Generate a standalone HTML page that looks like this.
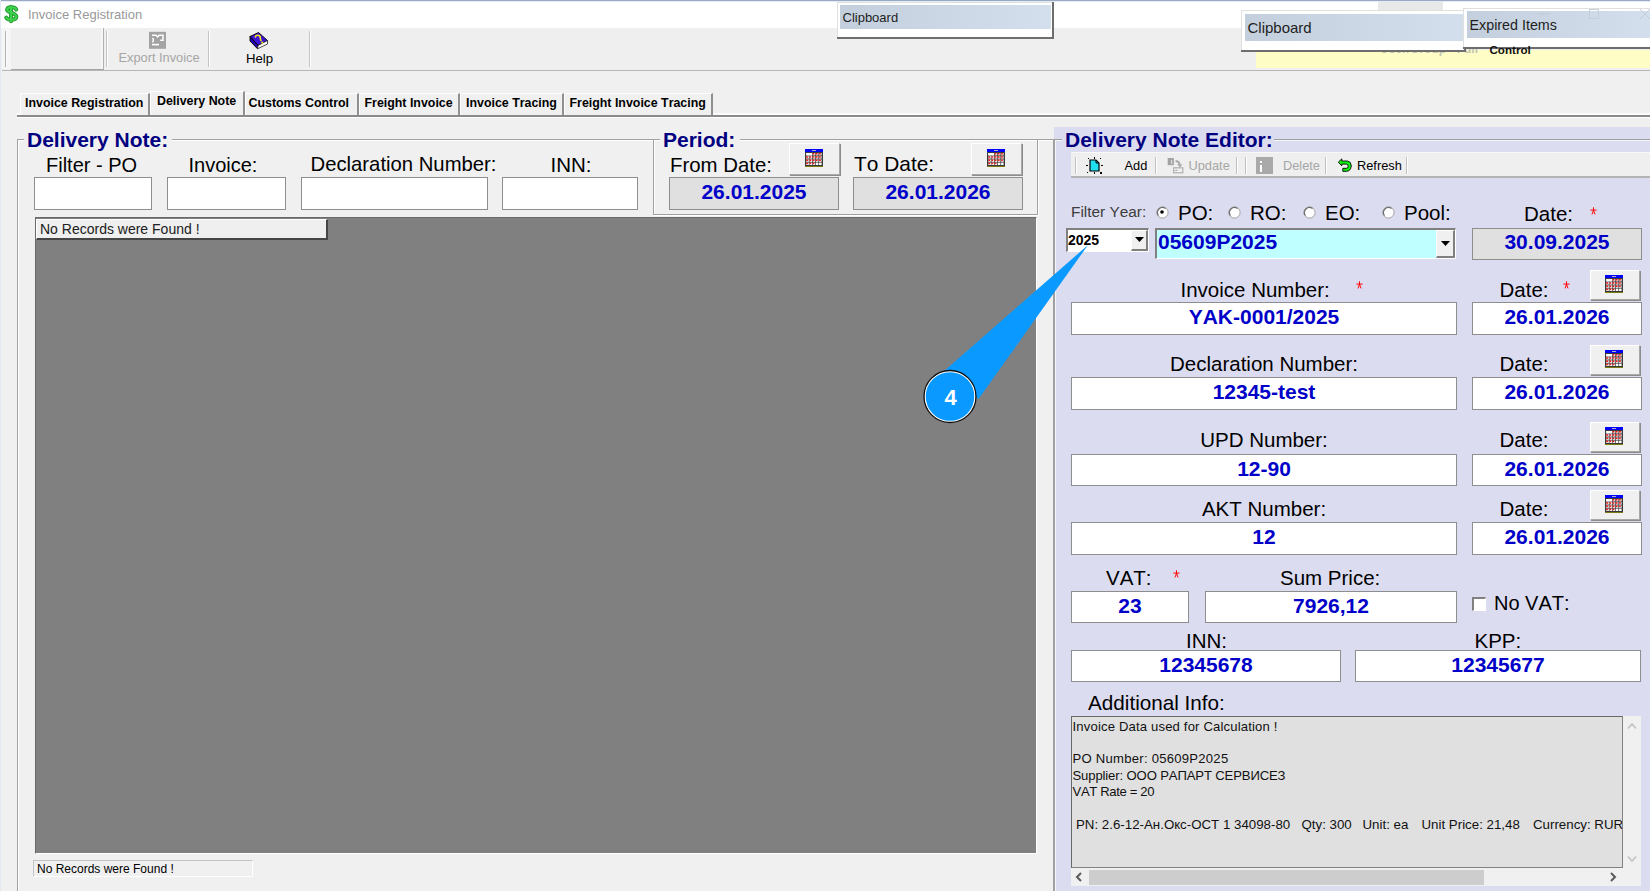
<!DOCTYPE html>
<html><head><meta charset="utf-8">
<style>
*{margin:0;padding:0;box-sizing:border-box}
html,body{width:1650px;height:891px;overflow:hidden;background:#f0f0f0;font-family:"Liberation Sans",sans-serif}
body{position:relative}
.a{position:absolute}
.t{position:absolute;white-space:nowrap;line-height:1;font-kerning:none}
.calbtn{background:#f0f0f0;border-top:1px solid #fff;border-left:1px solid #fff;border-right:1px solid #a8a8a8;border-bottom:1px solid #a8a8a8;box-shadow:1px 1px 0 #8c8c8c}
</style></head><body>

<div class="a" style="left:0px;top:0px;width:1650px;height:28px;background:#fff"></div>
<div class="a" style="left:0px;top:0px;width:1650px;height:1px;background:#9aa8c0"></div>
<div class="a" style="left:0px;top:1px;width:1650px;height:1px;background:#e2ecf8"></div>
<div class="a" style="left:0px;top:0px;width:1px;height:891px;background:#e2e9f4"></div>
<svg class="a" style="left:0;top:0" width="24" height="28" viewBox="0 0 24 28"><g fill="none" stroke-linecap="round"><path d="M16.3 9.6C15 6.8 8.2 6.3 7.1 9.3C6 12.6 16.4 12.6 16.4 16.6C16.2 20.4 8.4 20.8 6.2 17.6M11 6.6V21.2" stroke="#1f9a2c" stroke-width="3.9"/><path d="M16.3 9.6C15 6.8 8.2 6.3 7.1 9.3C6 12.6 16.4 12.6 16.4 16.6C16.2 20.4 8.4 20.8 6.2 17.6M11 6.6V21.2" stroke="#3ed24e" stroke-width="2.0"/></g></svg>
<div class="t" style="left:28.0px;top:8.3px;font-size:13px;color:#999;font-weight:normal;">Invoice Registration</div>
<div class="a" style="left:2px;top:28px;width:1648px;height:41px;background:#efefef"></div>
<div class="a" style="left:2px;top:70px;width:1648px;height:1px;background:#b6b6b6"></div>
<div class="a" style="left:11px;top:69px;width:93px;height:1px;background:#a4a4a4"></div>
<div class="a" style="left:11px;top:28px;width:93px;height:41px;background:#efefef;border-right:1px solid #b0b0b0;box-shadow:inset -2px 0 0 #f6f6f6"></div>
<div class="a" style="left:2px;top:28px;width:9px;height:41px;background:#f5f5f5"></div>
<div class="a" style="left:5px;top:31px;width:1px;height:36px;background:#b4b4b4"></div>
<div class="a" style="left:6px;top:31px;width:1px;height:36px;background:#fafafa"></div>
<div class="a" style="left:106px;top:31px;width:2px;height:36px;background:#c4c4c4;border-right:1px solid #fff"></div>
<div class="a" style="left:208px;top:31px;width:2px;height:36px;background:#c4c4c4;border-right:1px solid #fff"></div>
<div class="a" style="left:309px;top:31px;width:2px;height:36px;background:#c4c4c4;border-right:1px solid #fff"></div>
<svg class="a" style="left:140px;top:28px" width="40" height="24" viewBox="140 28 40 24"><rect x="149" y="31.8" width="17" height="17" fill="#a3a3a3"/><path d="M152 35.3H156L157.6 37L159.2 35.3H163V40.2H160.2" fill="none" stroke="#fff" stroke-width="1.5"/><path d="M152.3 38Q154.6 40 152.3 42.3" fill="none" stroke="#fff" stroke-width="1.4"/><path d="M152 44.6H159" stroke="#fff" stroke-width="1.6"/></svg>
<div class="t" style="left:118.5px;top:52.0px;font-size:12.8px;color:#a6a6a6;font-weight:normal;">Export Invoice</div>
<svg class="a" style="left:240px;top:28px" width="40" height="24" viewBox="240 28 40 24"><path d="M250 36.5L258.5 32.5L267.5 40.5L258 45.5Z" fill="#3c12d8" stroke="#000" stroke-width="0.9"/><path d="M250 36.5L258 45.5L257.5 48.8L250 41Z" fill="#2800b4" stroke="#000" stroke-width="0.9"/><path d="M258 45.5L267.5 40.5L267.5 44L257.5 48.8Z" fill="#fafafa" stroke="#222" stroke-width="0.8"/><path d="M255.3 37.6Q255.5 35 258 35.3Q260.6 35.8 260.3 38.2Q260.4 39.5 261.2 41" fill="none" stroke="#f4e41a" stroke-width="1.6"/><circle cx="262.2" cy="42.6" r="1.1" fill="#f4e41a"/></svg>
<div class="t" style="left:246.0px;top:51.6px;font-size:13.2px;color:#000;font-weight:normal;">Help</div>
<div class="a" style="left:1256px;top:50px;width:394px;height:18px;background:#fffdc6"></div>
<div class="t" style="left:1380.0px;top:43.3px;font-size:12px;color:#c4c4b0;font-weight:bold;">User/Group - Full</div>
<div class="a" style="left:1378px;top:2px;width:65px;height:8px;background:#e8e8e8"></div>
<div class="a" style="left:837px;top:2px;width:217px;height:37px;background:#fff;border-right:2px solid #6e6e6e;border-bottom:2px solid #6e6e6e;box-shadow:inset 1px 1px 0 #e0e0e0"></div>
<div class="a" style="left:840px;top:5px;width:211px;height:24px;background:linear-gradient(90deg,#c3cfdc,#d3dfec)"></div>
<div class="t" style="left:842.5px;top:10.6px;font-size:13px;color:#1e1e1e;font-weight:normal;">Clipboard</div>
<div class="a" style="left:1241px;top:10px;width:225px;height:42px;background:#fff;border-right:2px solid #6e6e6e;border-bottom:2px solid #6e6e6e;box-shadow:inset 1px 1px 0 #e0e0e0"></div>
<div class="a" style="left:1245px;top:14px;width:218px;height:27px;background:linear-gradient(90deg,#c3cfdc,#d3dfec)"></div>
<div class="t" style="left:1247.5px;top:20.3px;font-size:15px;color:#1e1e1e;font-weight:normal;">Clipboard</div>
<div class="a" style="left:1463px;top:8px;width:189px;height:41px;background:#fff;border-right:2px solid #6e6e6e;border-bottom:2px solid #6e6e6e;box-shadow:inset 1px 1px 0 #e0e0e0"></div>
<div class="a" style="left:1467px;top:11px;width:185px;height:27px;background:linear-gradient(90deg,#c3cfdc,#d3dfec)"></div>
<div class="t" style="left:1469.5px;top:17.9px;font-size:14.3px;color:#1e1e1e;font-weight:normal;">Expired Items</div>
<div class="t" style="left:1489.5px;top:43.7px;font-size:11.6px;color:#111;font-weight:bold;">Control</div>
<svg class="a" style="left:1530px;top:8px" width="120" height="14"><path d="M8 6H20" stroke="#c0cad6" stroke-width="1"/><rect x="59.5" y="1.5" width="9" height="9" fill="none" stroke="#c4ced9"/><path d="M110 1L120 11M120 1L110 11" stroke="#c4ced9" stroke-width="1"/></svg>
<div class="a" style="left:17px;top:115px;width:1633px;height:2px;background:#8a8a8a"></div>
<div class="a" style="left:17px;top:113px;width:1633px;height:2px;background:#fbfbfb"></div>
<div class="a" style="left:17px;top:117px;width:1633px;height:1px;background:#fff"></div>
<div class="a" style="left:20px;top:93px;width:130px;height:22px;background:#f0f0f0;border-top:1px solid #fdfdfd;border-left:1px solid #fdfdfd;border-right:2px solid #909090"></div>
<div class="t" style="left:25.0px;top:97.2px;font-size:12.4px;color:#000;font-weight:bold;">Invoice Registration</div>
<div class="a" style="left:359px;top:93px;width:101px;height:22px;background:#f0f0f0;border-top:1px solid #fdfdfd;border-left:1px solid #fdfdfd;border-right:2px solid #909090"></div>
<div class="t" style="left:364.5px;top:97.1px;font-size:12.4px;color:#000;font-weight:bold;">Freight Invoice</div>
<div class="a" style="left:460px;top:93px;width:104px;height:22px;background:#f0f0f0;border-top:1px solid #fdfdfd;border-left:1px solid #fdfdfd;border-right:2px solid #909090"></div>
<div class="t" style="left:466.0px;top:97.1px;font-size:12.4px;color:#000;font-weight:bold;">Invoice Tracing</div>
<div class="a" style="left:564px;top:93px;width:149px;height:22px;background:#f0f0f0;border-top:1px solid #fdfdfd;border-left:1px solid #fdfdfd;border-right:2px solid #909090"></div>
<div class="t" style="left:569.5px;top:97.1px;font-size:12.4px;color:#000;font-weight:bold;">Freight Invoice Tracing</div>
<div class="a" style="left:245px;top:93px;width:114px;height:22px;background:#f0f0f0;border-top:1px solid #fdfdfd;border-left:1px solid #fdfdfd;border-right:2px solid #909090"></div>
<div class="t" style="left:248.5px;top:97.0px;font-size:12.4px;color:#000;font-weight:bold;">Customs Control</div>
<div class="a" style="left:150px;top:91px;width:95px;height:24px;background:#f0f0f0;border-top:1px solid #fdfdfd;border-left:1px solid #fdfdfd;border-right:2px solid #909090"></div>
<div class="t" style="left:157.0px;top:95.4px;font-size:12.4px;color:#000;font-weight:bold;">Delivery Note</div>
<div class="a" style="left:17px;top:139px;width:1038px;height:1px;background:#a0a0a0"></div>
<div class="a" style="left:18px;top:140px;width:1037px;height:1px;background:#fff"></div>
<div class="a" style="left:17px;top:139px;width:1px;height:752px;background:#a0a0a0"></div>
<div class="a" style="left:18px;top:140px;width:1px;height:751px;background:#fff"></div>
<div class="a" style="left:1053px;top:139px;width:1px;height:752px;background:#a0a0a0"></div>
<div class="a" style="left:24px;top:128px;width:148px;height:22px;background:#f0f0f0"></div>
<div class="t" style="left:27.0px;top:129.2px;font-size:21px;color:#000080;font-weight:bold;">Delivery Note:</div>
<div class="t" style="left:46.0px;top:155.1px;font-size:20px;color:#000;font-weight:normal;">Filter - PO</div>
<div class="t" style="left:188.5px;top:155.1px;font-size:20px;color:#000;font-weight:normal;">Invoice:</div>
<div class="t" style="left:310.5px;top:154.3px;font-size:20.3px;color:#000;font-weight:normal;">Declaration Number:</div>
<div class="t" style="left:550.5px;top:154.6px;font-size:20.5px;color:#000;font-weight:normal;">INN:</div>
<div class="a" style="left:34px;top:177px;width:118px;height:33px;background:#fff;border:1px solid #8e8e8e"></div>
<div class="a" style="left:167px;top:177px;width:119px;height:33px;background:#fff;border:1px solid #8e8e8e"></div>
<div class="a" style="left:301px;top:177px;width:187px;height:33px;background:#fff;border:1px solid #8e8e8e"></div>
<div class="a" style="left:502px;top:177px;width:136px;height:33px;background:#fff;border:1px solid #8e8e8e"></div>
<div class="a" style="left:653px;top:139px;width:385px;height:76px;border:1px solid #a0a0a0;box-shadow:1px 1px 0 #fff, inset 1px 1px 0 #fff"></div>
<div class="a" style="left:660px;top:128px;width:80px;height:22px;background:#f0f0f0"></div>
<div class="t" style="left:663.0px;top:129.2px;font-size:21px;color:#000080;font-weight:bold;">Period:</div>
<div class="t" style="left:670.0px;top:154.7px;font-size:20.4px;color:#000;font-weight:normal;">From Date:</div>
<div class="t" style="left:854.0px;top:154.3px;font-size:20.9px;color:#000;font-weight:normal;">To Date:</div>
<div class="a calbtn" style="left:789px;top:143px;width:51px;height:32px"><div class="a" style="left:15px;top:5px"><svg width="18" height="18" viewBox="0 0 18 18"><rect x="0" y="0" width="18" height="18" fill="#3a3a3a"/><rect x="0" y="0" width="18" height="3" fill="#0000ff"/><rect x="7" y="1" width="4" height="1" fill="#b0b0c0"/><rect x="1.30" y="4.00" width="2.5" height="2.4" fill="#fff"/><rect x="4.50" y="4.00" width="2.5" height="2.4" fill="#fff"/><rect x="7.70" y="4.00" width="2.5" height="2.4" fill="#fff"/><rect x="7.70" y="4.00" width="1.7" height="1.6" fill="#f01818"/><rect x="10.90" y="4.00" width="2.5" height="2.4" fill="#fff"/><rect x="10.90" y="4.00" width="1.7" height="1.6" fill="#f01818"/><rect x="14.10" y="4.00" width="2.5" height="2.4" fill="#fff"/><rect x="14.10" y="4.00" width="1.7" height="1.6" fill="#f01818"/><rect x="1.30" y="7.20" width="2.5" height="2.4" fill="#fff"/><rect x="1.30" y="7.20" width="1.7" height="1.6" fill="#f01818"/><rect x="4.50" y="7.20" width="2.5" height="2.4" fill="#fff"/><rect x="4.50" y="7.20" width="1.7" height="1.6" fill="#f01818"/><rect x="7.70" y="7.20" width="2.5" height="2.4" fill="#fff"/><rect x="7.70" y="7.20" width="1.7" height="1.6" fill="#f01818"/><rect x="10.90" y="7.20" width="2.5" height="2.4" fill="#fff"/><rect x="10.90" y="7.20" width="1.7" height="1.6" fill="#f01818"/><rect x="14.10" y="7.20" width="2.5" height="2.4" fill="#fff"/><rect x="14.10" y="7.20" width="1.7" height="1.6" fill="#f01818"/><rect x="1.30" y="10.40" width="2.5" height="2.4" fill="#fff"/><rect x="1.30" y="10.40" width="1.7" height="1.6" fill="#f01818"/><rect x="4.50" y="10.40" width="2.5" height="2.4" fill="#fff"/><rect x="4.50" y="10.40" width="1.7" height="1.6" fill="#f01818"/><rect x="7.70" y="10.40" width="2.5" height="2.4" fill="#fff"/><rect x="7.70" y="10.40" width="1.7" height="1.6" fill="#f01818"/><rect x="10.90" y="10.40" width="2.5" height="2.4" fill="#fff"/><rect x="10.90" y="10.40" width="1.7" height="1.6" fill="#f01818"/><rect x="14.10" y="10.40" width="2.5" height="2.4" fill="#fff"/><rect x="14.10" y="10.40" width="1.7" height="1.6" fill="#f01818"/><rect x="1.30" y="13.60" width="2.5" height="2.4" fill="#fff"/><rect x="1.30" y="13.60" width="1.7" height="1.6" fill="#f01818"/><rect x="4.50" y="13.60" width="2.5" height="2.4" fill="#fff"/><rect x="4.50" y="13.60" width="1.7" height="1.6" fill="#f01818"/><rect x="7.70" y="13.60" width="2.5" height="2.4" fill="#fff"/><rect x="7.70" y="13.60" width="1.7" height="1.6" fill="#f01818"/><rect x="10.90" y="13.60" width="2.5" height="2.4" fill="#fff"/><rect x="14.10" y="13.60" width="2.5" height="2.4" fill="#fff"/><rect x="1.3" y="4" width="5.7" height="2.4" fill="#fff"/><rect x="0" y="17" width="18" height="1" fill="#7a7a10"/></svg></div></div>
<div class="a calbtn" style="left:971px;top:143px;width:51px;height:32px"><div class="a" style="left:15px;top:5px"><svg width="18" height="18" viewBox="0 0 18 18"><rect x="0" y="0" width="18" height="18" fill="#3a3a3a"/><rect x="0" y="0" width="18" height="3" fill="#0000ff"/><rect x="7" y="1" width="4" height="1" fill="#b0b0c0"/><rect x="1.30" y="4.00" width="2.5" height="2.4" fill="#fff"/><rect x="4.50" y="4.00" width="2.5" height="2.4" fill="#fff"/><rect x="7.70" y="4.00" width="2.5" height="2.4" fill="#fff"/><rect x="7.70" y="4.00" width="1.7" height="1.6" fill="#f01818"/><rect x="10.90" y="4.00" width="2.5" height="2.4" fill="#fff"/><rect x="10.90" y="4.00" width="1.7" height="1.6" fill="#f01818"/><rect x="14.10" y="4.00" width="2.5" height="2.4" fill="#fff"/><rect x="14.10" y="4.00" width="1.7" height="1.6" fill="#f01818"/><rect x="1.30" y="7.20" width="2.5" height="2.4" fill="#fff"/><rect x="1.30" y="7.20" width="1.7" height="1.6" fill="#f01818"/><rect x="4.50" y="7.20" width="2.5" height="2.4" fill="#fff"/><rect x="4.50" y="7.20" width="1.7" height="1.6" fill="#f01818"/><rect x="7.70" y="7.20" width="2.5" height="2.4" fill="#fff"/><rect x="7.70" y="7.20" width="1.7" height="1.6" fill="#f01818"/><rect x="10.90" y="7.20" width="2.5" height="2.4" fill="#fff"/><rect x="10.90" y="7.20" width="1.7" height="1.6" fill="#f01818"/><rect x="14.10" y="7.20" width="2.5" height="2.4" fill="#fff"/><rect x="14.10" y="7.20" width="1.7" height="1.6" fill="#f01818"/><rect x="1.30" y="10.40" width="2.5" height="2.4" fill="#fff"/><rect x="1.30" y="10.40" width="1.7" height="1.6" fill="#f01818"/><rect x="4.50" y="10.40" width="2.5" height="2.4" fill="#fff"/><rect x="4.50" y="10.40" width="1.7" height="1.6" fill="#f01818"/><rect x="7.70" y="10.40" width="2.5" height="2.4" fill="#fff"/><rect x="7.70" y="10.40" width="1.7" height="1.6" fill="#f01818"/><rect x="10.90" y="10.40" width="2.5" height="2.4" fill="#fff"/><rect x="10.90" y="10.40" width="1.7" height="1.6" fill="#f01818"/><rect x="14.10" y="10.40" width="2.5" height="2.4" fill="#fff"/><rect x="14.10" y="10.40" width="1.7" height="1.6" fill="#f01818"/><rect x="1.30" y="13.60" width="2.5" height="2.4" fill="#fff"/><rect x="1.30" y="13.60" width="1.7" height="1.6" fill="#f01818"/><rect x="4.50" y="13.60" width="2.5" height="2.4" fill="#fff"/><rect x="4.50" y="13.60" width="1.7" height="1.6" fill="#f01818"/><rect x="7.70" y="13.60" width="2.5" height="2.4" fill="#fff"/><rect x="7.70" y="13.60" width="1.7" height="1.6" fill="#f01818"/><rect x="10.90" y="13.60" width="2.5" height="2.4" fill="#fff"/><rect x="14.10" y="13.60" width="2.5" height="2.4" fill="#fff"/><rect x="1.3" y="4" width="5.7" height="2.4" fill="#fff"/><rect x="0" y="17" width="18" height="1" fill="#7a7a10"/></svg></div></div>
<div class="a" style="left:669px;top:177px;width:170px;height:33px;background:#e0e0e0;border:1px solid #8e8e8e"></div>
<div class="a" style="left:853px;top:177px;width:170px;height:33px;background:#e0e0e0;border:1px solid #8e8e8e"></div>
<div class="t" style="left:669.0px;width:170.0px;text-align:center;top:181.2px;font-size:21px;color:#0000c8;font-weight:bold;">26.01.2025</div>
<div class="t" style="left:853.0px;width:170.0px;text-align:center;top:181.2px;font-size:21px;color:#0000c8;font-weight:bold;">26.01.2026</div>
<div class="a" style="left:35px;top:217px;width:1002px;height:637px;background:#808080;border-right:1px solid #fff;border-bottom:1px solid #fff;border-top:1px solid #6a6a6a;border-left:1px solid #6a6a6a"></div>
<div class="a" style="left:36px;top:219px;width:292px;height:21px;background:#efefef;border-right:2px solid #454545;border-bottom:2px solid #454545;border-top:1px solid #fff;border-left:1px solid #fff"></div>
<div class="t" style="left:40.0px;top:222.4px;font-size:14px;color:#202020;font-weight:normal;">No Records were Found !</div>
<div class="a" style="left:33px;top:860px;width:220px;height:17px;background:#f0f0f0;border-top:1px solid #c4c4c4;border-left:1px solid #c4c4c4;border-right:1px solid #fff;border-bottom:1px solid #fff"></div>
<div class="t" style="left:37.0px;top:862.6px;font-size:12px;color:#000;font-weight:normal;">No Records were Found !</div>
<div class="a" style="left:1054px;top:127px;width:596px;height:764px;background:#dcdcf0"></div>
<div class="a" style="left:1054px;top:139px;width:596px;height:1px;background:#a0a0a0"></div>
<div class="a" style="left:1055px;top:140px;width:595px;height:1px;background:#f4f4fa"></div>
<div class="a" style="left:1054px;top:139px;width:1px;height:752px;background:#a0a0a0"></div>
<div class="a" style="left:1055px;top:140px;width:1px;height:751px;background:#f4f4fa"></div>
<div class="a" style="left:1062px;top:128px;width:212px;height:22px;background:#dcdcf0"></div>
<div class="t" style="left:1065.0px;top:128.9px;font-size:21px;color:#000080;font-weight:bold;">Delivery Note Editor:</div>
<div class="a" style="left:1071px;top:152px;width:579px;height:26px;background:#efefef;border-top:1px solid #f8f8f8;border-bottom:2px solid #b4b4b4"></div>
<div class="a" style="left:1075px;top:157px;width:2px;height:17px;background:#c0c0c0;border-right:1px solid #fff"></div>
<div class="a" style="left:1155px;top:157px;width:2px;height:17px;background:#c0c0c0;border-right:1px solid #fff"></div>
<div class="a" style="left:1236px;top:157px;width:2px;height:17px;background:#c0c0c0;border-right:1px solid #fff"></div>
<div class="a" style="left:1245px;top:157px;width:2px;height:17px;background:#c0c0c0;border-right:1px solid #fff"></div>
<div class="a" style="left:1325px;top:157px;width:2px;height:17px;background:#c0c0c0;border-right:1px solid #fff"></div>
<div class="a" style="left:1406px;top:157px;width:2px;height:17px;background:#c0c0c0;border-right:1px solid #fff"></div>
<svg class="a" style="left:1086px;top:157px" width="17" height="17" viewBox="0 0 17 17"><path d="M4 3H10L13 6V14H4Z" fill="#20e0f0" stroke="#000" stroke-width="1.2"/><path d="M10 3V6H13" fill="none" stroke="#000" stroke-width="1"/><g fill="#000"><rect x="0" y="8" width="2" height="1"/><rect x="15" y="8" width="2" height="1"/><rect x="8" y="0" width="1" height="2"/><rect x="2" y="1" width="1" height="1"/><rect x="14" y="1" width="1" height="1"/><rect x="1" y="15" width="1" height="1"/><rect x="14" y="15" width="2" height="2"/><rect x="8" y="15" width="1" height="2"/></g></svg>
<div class="t" style="left:1124.5px;top:159.6px;font-size:12.8px;color:#000;font-weight:normal;">Add</div>
<svg class="a" style="left:1162px;top:153px" width="24" height="24" viewBox="1162 153 24 24"><rect x="1167.7" y="158" width="6.2" height="7.2" fill="#a4a4a4"/><rect x="1171" y="160.3" width="1.2" height="1.2" fill="#fff"/><rect x="1171" y="162.3" width="1.2" height="1.2" fill="#fff"/><path d="M1175.5 161.3Q1179 160.8 1179.6 164.5" fill="none" stroke="#a8a8a8" stroke-width="1.8"/><path d="M1177.3 164L1182.5 164.5L1179.8 167.5Z" fill="#a8a8a8"/><rect x="1173.6" y="167.8" width="9.2" height="5" fill="none" stroke="#b0b0b0" stroke-width="1.2"/><path d="M1175 170.3H1177.5" stroke="#a0a0a0" stroke-width="1"/></svg>
<div class="t" style="left:1188.5px;top:159.6px;font-size:12.8px;color:#a6a6a6;font-weight:normal;">Update</div>
<svg class="a" style="left:1256px;top:157px" width="17" height="17" viewBox="0 0 17 17"><rect width="17" height="17" fill="#a9a9a9"/><rect x="4" y="8" width="2" height="7" fill="#fff"/><rect x="4" y="4" width="2" height="2" fill="#fff"/></svg>
<div class="t" style="left:1283.0px;top:159.6px;font-size:12.8px;color:#a6a6a6;font-weight:normal;">Delete</div>
<svg class="a" style="left:1332px;top:153px" width="24" height="24" viewBox="1332 153 24 24"><path d="M1338.3 162.2L1341.8 158.9V161H1347.5Q1351.3 161.6 1351.3 166Q1350.6 171.2 1346.5 171.3H1342.8V168.3H1346.3Q1348.2 168.2 1348.2 166.2Q1348 164.2 1346.3 164.1H1341.8V165.8Z" fill="#10f010" stroke="#000" stroke-width="0.9" stroke-linejoin="round"/></svg>
<div class="t" style="left:1357.0px;top:159.6px;font-size:12.8px;color:#000;font-weight:normal;">Refresh</div>
<div class="t" style="left:1071.0px;top:204.4px;font-size:15.4px;color:#3c3c3c;font-weight:normal;">Filter Year:</div>
<svg class="a" style="left:1156px;top:206px" width="13" height="13" viewBox="0 0 13 13"><circle cx="6.5" cy="6.5" r="5.6" fill="#fff" stroke="#a0a0a0" stroke-width="1"/><path d="M2.5 9.5A5 5 0 0 1 9.5 2.5" fill="none" stroke="#6e6e6e" stroke-width="1.2"/><circle cx="6" cy="6" r="1.8" fill="#000"/></svg>
<div class="t" style="left:1178.0px;top:203.1px;font-size:20.5px;color:#000;font-weight:normal;">PO:</div>
<svg class="a" style="left:1228px;top:206px" width="13" height="13" viewBox="0 0 13 13"><circle cx="6.5" cy="6.5" r="5.6" fill="#fff" stroke="#a0a0a0" stroke-width="1"/><path d="M2.5 9.5A5 5 0 0 1 9.5 2.5" fill="none" stroke="#6e6e6e" stroke-width="1.2"/></svg>
<div class="t" style="left:1250.0px;top:203.1px;font-size:20.5px;color:#000;font-weight:normal;">RO:</div>
<svg class="a" style="left:1303px;top:206px" width="13" height="13" viewBox="0 0 13 13"><circle cx="6.5" cy="6.5" r="5.6" fill="#fff" stroke="#a0a0a0" stroke-width="1"/><path d="M2.5 9.5A5 5 0 0 1 9.5 2.5" fill="none" stroke="#6e6e6e" stroke-width="1.2"/></svg>
<div class="t" style="left:1325.0px;top:203.1px;font-size:20.5px;color:#000;font-weight:normal;">EO:</div>
<svg class="a" style="left:1382px;top:206px" width="13" height="13" viewBox="0 0 13 13"><circle cx="6.5" cy="6.5" r="5.6" fill="#fff" stroke="#a0a0a0" stroke-width="1"/><path d="M2.5 9.5A5 5 0 0 1 9.5 2.5" fill="none" stroke="#6e6e6e" stroke-width="1.2"/></svg>
<div class="t" style="left:1404.0px;top:203.1px;font-size:20.5px;color:#000;font-weight:normal;">Pool:</div>
<div class="t" style="left:1524.0px;top:204.1px;font-size:20.5px;color:#000;font-weight:normal;">Date:</div>
<svg class="a" style="left:1590px;top:207px" width="7" height="8" viewBox="0 0 7 8"><path d="M3.5 0.3V3.8M0.4 3.1H6.6M3.5 3.4L2 7.4M3.5 3.4L5 7.4" stroke="#ff0000" stroke-width="1" fill="none"/></svg>
<div class="a" style="left:1066px;top:228px;width:83px;height:24px;background:#fff;border-top:2px solid #808080;border-left:2px solid #808080;border-right:1px solid #fff;border-bottom:1px solid #fff"></div>
<div class="t" style="left:1068.0px;top:232.8px;font-size:14px;color:#000;font-weight:bold;">2025</div>
<div class="a" style="left:1131px;top:230px;width:17px;height:21px;background:#f0f0f0;border-right:2px solid #808080;border-bottom:2px solid #808080;border-top:1px solid #fff;border-left:1px solid #fff"></div>
<svg class="a" style="left:1135px;top:237px" width="9" height="6"><path d="M0 0H9L4.5 5Z" fill="#000"/></svg>
<div class="a" style="left:1155px;top:228px;width:301px;height:31px;background:#c0ffff;border-top:2px solid #808080;border-left:2px solid #808080;border-right:1px solid #fff;border-bottom:1px solid #fff"></div>
<div class="t" style="left:1158.0px;top:231.2px;font-size:21px;color:#0000c8;font-weight:bold;">05609P2025</div>
<div class="a" style="left:1436px;top:230px;width:19px;height:28px;background:#f0f0f0;border-right:2px solid #808080;border-bottom:2px solid #808080;border-top:1px solid #fff;border-left:1px solid #fff"></div>
<svg class="a" style="left:1441px;top:241px" width="9" height="6"><path d="M0 0H9L4.5 5Z" fill="#000"/></svg>
<div class="a" style="left:1472px;top:228px;width:170px;height:32px;background:#e0e0e0;border:1px solid #8e8e8e"></div>
<div class="t" style="left:1472.0px;width:170.0px;text-align:center;top:230.9px;font-size:21px;color:#0000c8;font-weight:bold;">30.09.2025</div>
<div class="t" style="left:1180.5px;top:279.6px;font-size:20.5px;color:#000;font-weight:normal;">Invoice Number:</div>
<svg class="a" style="left:1355.5px;top:281.2px" width="7" height="8" viewBox="0 0 7 8"><path d="M3.5 0.3V3.8M0.4 3.1H6.6M3.5 3.4L2 7.4M3.5 3.4L5 7.4" stroke="#ff0000" stroke-width="1" fill="none"/></svg>
<div class="a" style="left:1071px;top:302px;width:386px;height:33px;background:#fff;border:1px solid #8e8e8e"></div>
<div class="t" style="left:1071.0px;width:386.0px;text-align:center;top:305.6px;font-size:21px;color:#0000c8;font-weight:bold;">YAK-0001/2025</div>
<div class="t" style="left:1499.5px;top:279.6px;font-size:20.5px;color:#000;font-weight:normal;">Date:</div>
<svg class="a" style="left:1562.5px;top:281.2px" width="7" height="8" viewBox="0 0 7 8"><path d="M3.5 0.3V3.8M0.4 3.1H6.6M3.5 3.4L2 7.4M3.5 3.4L5 7.4" stroke="#ff0000" stroke-width="1" fill="none"/></svg>
<div class="a calbtn" style="left:1590px;top:270px;width:50px;height:30px"><div class="a" style="left:14px;top:4px"><svg width="18" height="18" viewBox="0 0 18 18"><rect x="0" y="0" width="18" height="18" fill="#3a3a3a"/><rect x="0" y="0" width="18" height="3" fill="#0000ff"/><rect x="7" y="1" width="4" height="1" fill="#b0b0c0"/><rect x="1.30" y="4.00" width="2.5" height="2.4" fill="#fff"/><rect x="4.50" y="4.00" width="2.5" height="2.4" fill="#fff"/><rect x="7.70" y="4.00" width="2.5" height="2.4" fill="#fff"/><rect x="7.70" y="4.00" width="1.7" height="1.6" fill="#f01818"/><rect x="10.90" y="4.00" width="2.5" height="2.4" fill="#fff"/><rect x="10.90" y="4.00" width="1.7" height="1.6" fill="#f01818"/><rect x="14.10" y="4.00" width="2.5" height="2.4" fill="#fff"/><rect x="14.10" y="4.00" width="1.7" height="1.6" fill="#f01818"/><rect x="1.30" y="7.20" width="2.5" height="2.4" fill="#fff"/><rect x="1.30" y="7.20" width="1.7" height="1.6" fill="#f01818"/><rect x="4.50" y="7.20" width="2.5" height="2.4" fill="#fff"/><rect x="4.50" y="7.20" width="1.7" height="1.6" fill="#f01818"/><rect x="7.70" y="7.20" width="2.5" height="2.4" fill="#fff"/><rect x="7.70" y="7.20" width="1.7" height="1.6" fill="#f01818"/><rect x="10.90" y="7.20" width="2.5" height="2.4" fill="#fff"/><rect x="10.90" y="7.20" width="1.7" height="1.6" fill="#f01818"/><rect x="14.10" y="7.20" width="2.5" height="2.4" fill="#fff"/><rect x="14.10" y="7.20" width="1.7" height="1.6" fill="#f01818"/><rect x="1.30" y="10.40" width="2.5" height="2.4" fill="#fff"/><rect x="1.30" y="10.40" width="1.7" height="1.6" fill="#f01818"/><rect x="4.50" y="10.40" width="2.5" height="2.4" fill="#fff"/><rect x="4.50" y="10.40" width="1.7" height="1.6" fill="#f01818"/><rect x="7.70" y="10.40" width="2.5" height="2.4" fill="#fff"/><rect x="7.70" y="10.40" width="1.7" height="1.6" fill="#f01818"/><rect x="10.90" y="10.40" width="2.5" height="2.4" fill="#fff"/><rect x="10.90" y="10.40" width="1.7" height="1.6" fill="#f01818"/><rect x="14.10" y="10.40" width="2.5" height="2.4" fill="#fff"/><rect x="14.10" y="10.40" width="1.7" height="1.6" fill="#f01818"/><rect x="1.30" y="13.60" width="2.5" height="2.4" fill="#fff"/><rect x="1.30" y="13.60" width="1.7" height="1.6" fill="#f01818"/><rect x="4.50" y="13.60" width="2.5" height="2.4" fill="#fff"/><rect x="4.50" y="13.60" width="1.7" height="1.6" fill="#f01818"/><rect x="7.70" y="13.60" width="2.5" height="2.4" fill="#fff"/><rect x="7.70" y="13.60" width="1.7" height="1.6" fill="#f01818"/><rect x="10.90" y="13.60" width="2.5" height="2.4" fill="#fff"/><rect x="14.10" y="13.60" width="2.5" height="2.4" fill="#fff"/><rect x="1.3" y="4" width="5.7" height="2.4" fill="#fff"/><rect x="0" y="17" width="18" height="1" fill="#7a7a10"/></svg></div></div>
<div class="a" style="left:1472px;top:302px;width:170px;height:33px;background:#fff;border:1px solid #8e8e8e"></div>
<div class="t" style="left:1472.0px;width:170.0px;text-align:center;top:305.6px;font-size:21px;color:#0000c8;font-weight:bold;">26.01.2026</div>
<div class="t" style="left:1071.0px;width:386.0px;text-align:center;top:354.1px;font-size:20.5px;color:#000;font-weight:normal;">Declaration Number:</div>
<div class="a" style="left:1071px;top:377px;width:386px;height:33px;background:#fff;border:1px solid #8e8e8e"></div>
<div class="t" style="left:1071.0px;width:386.0px;text-align:center;top:380.6px;font-size:21px;color:#0000c8;font-weight:bold;">12345-test</div>
<div class="t" style="left:1499.5px;top:354.1px;font-size:20.5px;color:#000;font-weight:normal;">Date:</div>
<div class="a calbtn" style="left:1590px;top:345px;width:50px;height:30px"><div class="a" style="left:14px;top:4px"><svg width="18" height="18" viewBox="0 0 18 18"><rect x="0" y="0" width="18" height="18" fill="#3a3a3a"/><rect x="0" y="0" width="18" height="3" fill="#0000ff"/><rect x="7" y="1" width="4" height="1" fill="#b0b0c0"/><rect x="1.30" y="4.00" width="2.5" height="2.4" fill="#fff"/><rect x="4.50" y="4.00" width="2.5" height="2.4" fill="#fff"/><rect x="7.70" y="4.00" width="2.5" height="2.4" fill="#fff"/><rect x="7.70" y="4.00" width="1.7" height="1.6" fill="#f01818"/><rect x="10.90" y="4.00" width="2.5" height="2.4" fill="#fff"/><rect x="10.90" y="4.00" width="1.7" height="1.6" fill="#f01818"/><rect x="14.10" y="4.00" width="2.5" height="2.4" fill="#fff"/><rect x="14.10" y="4.00" width="1.7" height="1.6" fill="#f01818"/><rect x="1.30" y="7.20" width="2.5" height="2.4" fill="#fff"/><rect x="1.30" y="7.20" width="1.7" height="1.6" fill="#f01818"/><rect x="4.50" y="7.20" width="2.5" height="2.4" fill="#fff"/><rect x="4.50" y="7.20" width="1.7" height="1.6" fill="#f01818"/><rect x="7.70" y="7.20" width="2.5" height="2.4" fill="#fff"/><rect x="7.70" y="7.20" width="1.7" height="1.6" fill="#f01818"/><rect x="10.90" y="7.20" width="2.5" height="2.4" fill="#fff"/><rect x="10.90" y="7.20" width="1.7" height="1.6" fill="#f01818"/><rect x="14.10" y="7.20" width="2.5" height="2.4" fill="#fff"/><rect x="14.10" y="7.20" width="1.7" height="1.6" fill="#f01818"/><rect x="1.30" y="10.40" width="2.5" height="2.4" fill="#fff"/><rect x="1.30" y="10.40" width="1.7" height="1.6" fill="#f01818"/><rect x="4.50" y="10.40" width="2.5" height="2.4" fill="#fff"/><rect x="4.50" y="10.40" width="1.7" height="1.6" fill="#f01818"/><rect x="7.70" y="10.40" width="2.5" height="2.4" fill="#fff"/><rect x="7.70" y="10.40" width="1.7" height="1.6" fill="#f01818"/><rect x="10.90" y="10.40" width="2.5" height="2.4" fill="#fff"/><rect x="10.90" y="10.40" width="1.7" height="1.6" fill="#f01818"/><rect x="14.10" y="10.40" width="2.5" height="2.4" fill="#fff"/><rect x="14.10" y="10.40" width="1.7" height="1.6" fill="#f01818"/><rect x="1.30" y="13.60" width="2.5" height="2.4" fill="#fff"/><rect x="1.30" y="13.60" width="1.7" height="1.6" fill="#f01818"/><rect x="4.50" y="13.60" width="2.5" height="2.4" fill="#fff"/><rect x="4.50" y="13.60" width="1.7" height="1.6" fill="#f01818"/><rect x="7.70" y="13.60" width="2.5" height="2.4" fill="#fff"/><rect x="7.70" y="13.60" width="1.7" height="1.6" fill="#f01818"/><rect x="10.90" y="13.60" width="2.5" height="2.4" fill="#fff"/><rect x="14.10" y="13.60" width="2.5" height="2.4" fill="#fff"/><rect x="1.3" y="4" width="5.7" height="2.4" fill="#fff"/><rect x="0" y="17" width="18" height="1" fill="#7a7a10"/></svg></div></div>
<div class="a" style="left:1472px;top:377px;width:170px;height:33px;background:#fff;border:1px solid #8e8e8e"></div>
<div class="t" style="left:1472.0px;width:170.0px;text-align:center;top:380.6px;font-size:21px;color:#0000c8;font-weight:bold;">26.01.2026</div>
<div class="t" style="left:1071.0px;width:386.0px;text-align:center;top:429.6px;font-size:20.5px;color:#000;font-weight:normal;">UPD Number:</div>
<div class="a" style="left:1071px;top:454px;width:386px;height:32px;background:#fff;border:1px solid #8e8e8e"></div>
<div class="t" style="left:1071.0px;width:386.0px;text-align:center;top:457.6px;font-size:21px;color:#0000c8;font-weight:bold;">12-90</div>
<div class="t" style="left:1499.5px;top:429.6px;font-size:20.5px;color:#000;font-weight:normal;">Date:</div>
<div class="a calbtn" style="left:1590px;top:422px;width:50px;height:30px"><div class="a" style="left:14px;top:4px"><svg width="18" height="18" viewBox="0 0 18 18"><rect x="0" y="0" width="18" height="18" fill="#3a3a3a"/><rect x="0" y="0" width="18" height="3" fill="#0000ff"/><rect x="7" y="1" width="4" height="1" fill="#b0b0c0"/><rect x="1.30" y="4.00" width="2.5" height="2.4" fill="#fff"/><rect x="4.50" y="4.00" width="2.5" height="2.4" fill="#fff"/><rect x="7.70" y="4.00" width="2.5" height="2.4" fill="#fff"/><rect x="7.70" y="4.00" width="1.7" height="1.6" fill="#f01818"/><rect x="10.90" y="4.00" width="2.5" height="2.4" fill="#fff"/><rect x="10.90" y="4.00" width="1.7" height="1.6" fill="#f01818"/><rect x="14.10" y="4.00" width="2.5" height="2.4" fill="#fff"/><rect x="14.10" y="4.00" width="1.7" height="1.6" fill="#f01818"/><rect x="1.30" y="7.20" width="2.5" height="2.4" fill="#fff"/><rect x="1.30" y="7.20" width="1.7" height="1.6" fill="#f01818"/><rect x="4.50" y="7.20" width="2.5" height="2.4" fill="#fff"/><rect x="4.50" y="7.20" width="1.7" height="1.6" fill="#f01818"/><rect x="7.70" y="7.20" width="2.5" height="2.4" fill="#fff"/><rect x="7.70" y="7.20" width="1.7" height="1.6" fill="#f01818"/><rect x="10.90" y="7.20" width="2.5" height="2.4" fill="#fff"/><rect x="10.90" y="7.20" width="1.7" height="1.6" fill="#f01818"/><rect x="14.10" y="7.20" width="2.5" height="2.4" fill="#fff"/><rect x="14.10" y="7.20" width="1.7" height="1.6" fill="#f01818"/><rect x="1.30" y="10.40" width="2.5" height="2.4" fill="#fff"/><rect x="1.30" y="10.40" width="1.7" height="1.6" fill="#f01818"/><rect x="4.50" y="10.40" width="2.5" height="2.4" fill="#fff"/><rect x="4.50" y="10.40" width="1.7" height="1.6" fill="#f01818"/><rect x="7.70" y="10.40" width="2.5" height="2.4" fill="#fff"/><rect x="7.70" y="10.40" width="1.7" height="1.6" fill="#f01818"/><rect x="10.90" y="10.40" width="2.5" height="2.4" fill="#fff"/><rect x="10.90" y="10.40" width="1.7" height="1.6" fill="#f01818"/><rect x="14.10" y="10.40" width="2.5" height="2.4" fill="#fff"/><rect x="14.10" y="10.40" width="1.7" height="1.6" fill="#f01818"/><rect x="1.30" y="13.60" width="2.5" height="2.4" fill="#fff"/><rect x="1.30" y="13.60" width="1.7" height="1.6" fill="#f01818"/><rect x="4.50" y="13.60" width="2.5" height="2.4" fill="#fff"/><rect x="4.50" y="13.60" width="1.7" height="1.6" fill="#f01818"/><rect x="7.70" y="13.60" width="2.5" height="2.4" fill="#fff"/><rect x="7.70" y="13.60" width="1.7" height="1.6" fill="#f01818"/><rect x="10.90" y="13.60" width="2.5" height="2.4" fill="#fff"/><rect x="14.10" y="13.60" width="2.5" height="2.4" fill="#fff"/><rect x="1.3" y="4" width="5.7" height="2.4" fill="#fff"/><rect x="0" y="17" width="18" height="1" fill="#7a7a10"/></svg></div></div>
<div class="a" style="left:1472px;top:454px;width:170px;height:32px;background:#fff;border:1px solid #8e8e8e"></div>
<div class="t" style="left:1472.0px;width:170.0px;text-align:center;top:457.6px;font-size:21px;color:#0000c8;font-weight:bold;">26.01.2026</div>
<div class="t" style="left:1071.0px;width:386.0px;text-align:center;top:499.1px;font-size:20.5px;color:#000;font-weight:normal;">AKT Number:</div>
<div class="a" style="left:1071px;top:522px;width:386px;height:33px;background:#fff;border:1px solid #8e8e8e"></div>
<div class="t" style="left:1071.0px;width:386.0px;text-align:center;top:525.6px;font-size:21px;color:#0000c8;font-weight:bold;">12</div>
<div class="t" style="left:1499.5px;top:499.1px;font-size:20.5px;color:#000;font-weight:normal;">Date:</div>
<div class="a calbtn" style="left:1590px;top:490px;width:50px;height:30px"><div class="a" style="left:14px;top:4px"><svg width="18" height="18" viewBox="0 0 18 18"><rect x="0" y="0" width="18" height="18" fill="#3a3a3a"/><rect x="0" y="0" width="18" height="3" fill="#0000ff"/><rect x="7" y="1" width="4" height="1" fill="#b0b0c0"/><rect x="1.30" y="4.00" width="2.5" height="2.4" fill="#fff"/><rect x="4.50" y="4.00" width="2.5" height="2.4" fill="#fff"/><rect x="7.70" y="4.00" width="2.5" height="2.4" fill="#fff"/><rect x="7.70" y="4.00" width="1.7" height="1.6" fill="#f01818"/><rect x="10.90" y="4.00" width="2.5" height="2.4" fill="#fff"/><rect x="10.90" y="4.00" width="1.7" height="1.6" fill="#f01818"/><rect x="14.10" y="4.00" width="2.5" height="2.4" fill="#fff"/><rect x="14.10" y="4.00" width="1.7" height="1.6" fill="#f01818"/><rect x="1.30" y="7.20" width="2.5" height="2.4" fill="#fff"/><rect x="1.30" y="7.20" width="1.7" height="1.6" fill="#f01818"/><rect x="4.50" y="7.20" width="2.5" height="2.4" fill="#fff"/><rect x="4.50" y="7.20" width="1.7" height="1.6" fill="#f01818"/><rect x="7.70" y="7.20" width="2.5" height="2.4" fill="#fff"/><rect x="7.70" y="7.20" width="1.7" height="1.6" fill="#f01818"/><rect x="10.90" y="7.20" width="2.5" height="2.4" fill="#fff"/><rect x="10.90" y="7.20" width="1.7" height="1.6" fill="#f01818"/><rect x="14.10" y="7.20" width="2.5" height="2.4" fill="#fff"/><rect x="14.10" y="7.20" width="1.7" height="1.6" fill="#f01818"/><rect x="1.30" y="10.40" width="2.5" height="2.4" fill="#fff"/><rect x="1.30" y="10.40" width="1.7" height="1.6" fill="#f01818"/><rect x="4.50" y="10.40" width="2.5" height="2.4" fill="#fff"/><rect x="4.50" y="10.40" width="1.7" height="1.6" fill="#f01818"/><rect x="7.70" y="10.40" width="2.5" height="2.4" fill="#fff"/><rect x="7.70" y="10.40" width="1.7" height="1.6" fill="#f01818"/><rect x="10.90" y="10.40" width="2.5" height="2.4" fill="#fff"/><rect x="10.90" y="10.40" width="1.7" height="1.6" fill="#f01818"/><rect x="14.10" y="10.40" width="2.5" height="2.4" fill="#fff"/><rect x="14.10" y="10.40" width="1.7" height="1.6" fill="#f01818"/><rect x="1.30" y="13.60" width="2.5" height="2.4" fill="#fff"/><rect x="1.30" y="13.60" width="1.7" height="1.6" fill="#f01818"/><rect x="4.50" y="13.60" width="2.5" height="2.4" fill="#fff"/><rect x="4.50" y="13.60" width="1.7" height="1.6" fill="#f01818"/><rect x="7.70" y="13.60" width="2.5" height="2.4" fill="#fff"/><rect x="7.70" y="13.60" width="1.7" height="1.6" fill="#f01818"/><rect x="10.90" y="13.60" width="2.5" height="2.4" fill="#fff"/><rect x="14.10" y="13.60" width="2.5" height="2.4" fill="#fff"/><rect x="1.3" y="4" width="5.7" height="2.4" fill="#fff"/><rect x="0" y="17" width="18" height="1" fill="#7a7a10"/></svg></div></div>
<div class="a" style="left:1472px;top:522px;width:170px;height:33px;background:#fff;border:1px solid #8e8e8e"></div>
<div class="t" style="left:1472.0px;width:170.0px;text-align:center;top:525.6px;font-size:21px;color:#0000c8;font-weight:bold;">26.01.2026</div>
<div class="t" style="left:1106.0px;top:568.1px;font-size:20.5px;color:#000;font-weight:normal;">VAT:</div>
<svg class="a" style="left:1172.5px;top:569.5px" width="7" height="8" viewBox="0 0 7 8"><path d="M3.5 0.3V3.8M0.4 3.1H6.6M3.5 3.4L2 7.4M3.5 3.4L5 7.4" stroke="#ff0000" stroke-width="1" fill="none"/></svg>
<div class="t" style="left:1280.0px;top:568.1px;font-size:20.5px;color:#000;font-weight:normal;">Sum Price:</div>
<div class="a" style="left:1071px;top:591px;width:118px;height:32px;background:#fff;border:1px solid #8e8e8e"></div>
<div class="t" style="left:1071.0px;width:118.0px;text-align:center;top:594.6px;font-size:21px;color:#0000c8;font-weight:bold;">23</div>
<div class="a" style="left:1205px;top:591px;width:252px;height:32px;background:#fff;border:1px solid #8e8e8e"></div>
<div class="t" style="left:1205.0px;width:252.0px;text-align:center;top:594.6px;font-size:21px;color:#0000c8;font-weight:bold;">7926,12</div>
<div class="a" style="left:1472px;top:597px;width:14px;height:14px;background:#fff;border-top:2px solid #808080;border-left:2px solid #808080;border-right:1px solid #fff;border-bottom:1px solid #fff"></div>
<div class="t" style="left:1494.0px;top:593.3px;font-size:20px;color:#000;font-weight:normal;">No VAT:</div>
<div class="t" style="left:1186.0px;top:630.6px;font-size:20.5px;color:#000;font-weight:normal;">INN:</div>
<div class="t" style="left:1474.5px;top:630.6px;font-size:20.5px;color:#000;font-weight:normal;">KPP:</div>
<div class="a" style="left:1071px;top:650px;width:270px;height:32px;background:#fff;border:1px solid #8e8e8e"></div>
<div class="t" style="left:1071.0px;width:270.0px;text-align:center;top:653.6px;font-size:21px;color:#0000c8;font-weight:bold;">12345678</div>
<div class="a" style="left:1355px;top:650px;width:286px;height:32px;background:#fff;border:1px solid #8e8e8e"></div>
<div class="t" style="left:1355.0px;width:286.0px;text-align:center;top:653.6px;font-size:21px;color:#0000c8;font-weight:bold;">12345677</div>
<div class="t" style="left:1088.0px;top:693.2px;font-size:20.7px;color:#000;font-weight:normal;">Additional Info:</div>
<div class="a" style="left:1071px;top:716px;width:552px;height:152px;background:#e0e0e0;border:1px solid #696969;border-right-color:#828282;border-bottom-color:#828282;overflow:hidden"></div>
<div class="t" style="left:1072.5px;top:719.7px;font-size:13.1px;color:#111;font-weight:normal;letter-spacing:0.16px">Invoice Data used for Calculation !</div>
<div class="t" style="left:1072.5px;top:752.4px;font-size:13.1px;color:#111;font-weight:normal;letter-spacing:0.25px">PO Number: 05609P2025</div>
<div class="t" style="left:1072.5px;top:768.8px;font-size:13.1px;color:#111;font-weight:normal;letter-spacing:-0.13px">Supplier: ООО РАПАРТ СЕРВИСЕЗ</div>
<div class="t" style="left:1072.5px;top:785.1px;font-size:13.1px;color:#111;font-weight:normal;letter-spacing:-0.35px">VAT Rate = 20</div>
<div class="a" style="left:1072px;top:805px;width:550px;height:30px;overflow:hidden">
<div class="t" style="left:4.0px;top:12.7px;font-size:13.3px;color:#111;font-weight:normal;">PN: 2.6-12-Ан.Окс-ОСТ 1 34098-80</div>
<div class="t" style="left:229.5px;top:12.7px;font-size:13.3px;color:#111;font-weight:normal;">Qty: 300</div>
<div class="t" style="left:290.5px;top:12.7px;font-size:13.3px;color:#111;font-weight:normal;">Unit: ea</div>
<div class="t" style="left:349.5px;top:12.7px;font-size:13.3px;color:#111;font-weight:normal;">Unit Price: 21,48</div>
<div class="t" style="left:461.0px;top:12.7px;font-size:13.3px;color:#111;font-weight:normal;">Currency: RUR</div>
</div>
<div class="a" style="left:1623px;top:716px;width:18px;height:152px;background:#f0f0f0"></div>
<div class="a" style="left:1071px;top:868px;width:570px;height:18px;background:#f0f0f0"></div>
<div class="a" style="left:1089px;top:870px;width:395px;height:15px;background:#cdcdcd"></div>
<svg class="a" style="left:1626px;top:721px" width="12" height="10"><path d="M2 7.5L6 3L10 7.5" fill="none" stroke="#c4c4c4" stroke-width="1.8"/></svg>
<svg class="a" style="left:1626px;top:854px" width="12" height="10"><path d="M2 2.5L6 7L10 2.5" fill="none" stroke="#c4c4c4" stroke-width="1.8"/></svg>
<svg class="a" style="left:1074px;top:871px" width="10" height="12"><path d="M7 2L3 6L7 10" fill="none" stroke="#5a5a5a" stroke-width="2"/></svg>
<svg class="a" style="left:1608px;top:871px" width="10" height="12"><path d="M3 2L7 6L3 10" fill="none" stroke="#5a5a5a" stroke-width="2"/></svg>
<svg class="a" style="left:0;top:0" width="1650" height="891" viewBox="0 0 1650 891"><path d="M1088 245L943 372L978.5 399Z" fill="#0a99ff"/><circle cx="950" cy="396.5" r="25" fill="#0a99ff" stroke="#fff" stroke-width="1.5"/><circle cx="950" cy="396.5" r="26" fill="none" stroke="#111" stroke-width="1.3"/><text x="950.5" y="405" text-anchor="middle" font-family="Liberation Sans" font-weight="bold" font-size="22" fill="#fff">4</text></svg>
</body></html>
